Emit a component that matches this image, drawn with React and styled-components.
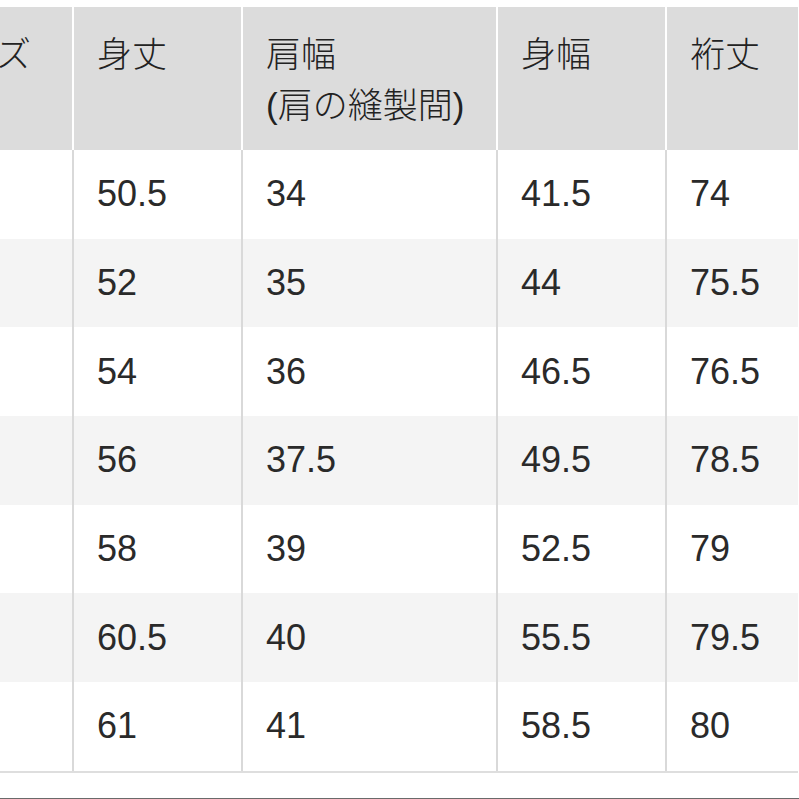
import React from 'react';
import styled, { createGlobalStyle } from 'styled-components';

const GlobalStyle = createGlobalStyle`
  html, body {
    margin: 0;
    padding: 0;
    background: #ffffff;
    overflow: hidden;
  }
  body {
    font-family: "Liberation Sans", "Noto Sans CJK JP", sans-serif;
    color: #1e1e1e;
  }
`;

const Page = styled.div`
  width: 799px;
  height: 799px;
  overflow: hidden;
  display: flex;
  flex-direction: column;
  padding-top: 7px;
  box-sizing: border-box;
`;

const Table = styled.div`
  width: 894px;
  margin-left: -96px;
  display: flex;
  flex-direction: column;
  border-bottom: 2px solid #dedede;
`;

const Row = styled.div`
  display: grid;
  grid-template-columns: 168px 167px 253px 167px 1fr;
  column-gap: 2px;
  background: ${(p) => (p.$head ? '#ffffff' : '#d9d9d9')};
  height: ${(p) => (p.$head ? '143px' : '88.7px')};
`;

const HeadCell = styled.div`
  background: #dcdcdc;
  padding: 22px 0 0 23px;
  font-size: 35px;
  font-weight: 300;
  line-height: 51px;
  color: #222222;
  white-space: nowrap;
`;

const Cell = styled.div`
  background: ${(p) => (p.$shade ? '#f4f4f4' : '#ffffff')};
  display: flex;
  align-items: center;
  padding-left: 23px;
  font-size: 36px;
  color: #2a2a2a;
`;

const Spacer = styled.div`
  flex: 1;
`;

const BottomRule = styled.div`
  height: 1px;
  background: #6a6a6a;
`;

const headers = [
  ['サイズ'],
  ['身丈'],
  ['肩幅', '(肩の縫製間)'],
  ['身幅'],
  ['裄丈'],
];

const rows = [
  ['', '50.5', '34', '41.5', '74'],
  ['', '52', '35', '44', '75.5'],
  ['', '54', '36', '46.5', '76.5'],
  ['', '56', '37.5', '49.5', '78.5'],
  ['', '58', '39', '52.5', '79'],
  ['', '60.5', '40', '55.5', '79.5'],
  ['', '61', '41', '58.5', '80'],
];

export default function App() {
  return (
    <>
      <GlobalStyle />
      <Page>
        <Table>
          <Row $head>
            {headers.map((lines, i) => (
              <HeadCell key={i}>
                {lines.map((l) => (
                  <div key={l}>{l}</div>
                ))}
              </HeadCell>
            ))}
          </Row>
          {rows.map((r, ri) => (
            <Row key={ri}>
              {r.map((v, ci) => (
                <Cell key={ci} $shade={ri % 2 === 1}>
                  {v}
                </Cell>
              ))}
            </Row>
          ))}
        </Table>
        <Spacer />
        <BottomRule />
      </Page>
    </>
  );
}
